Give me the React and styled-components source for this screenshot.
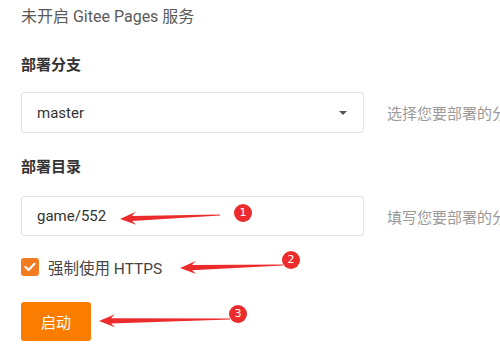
import React from 'react';
import styled, { createGlobalStyle } from 'styled-components';

const Global = createGlobalStyle`
  html, body { margin: 0; padding: 0; background: #fff; }
  body {
    font-family: Roboto, "Noto Sans CJK SC", sans-serif;
    overflow: hidden;
  }
`;

const Page = styled.div`
  position: relative;
  width: 500px;
  height: 348px;
  padding: 5px 0 0 21px;
  box-sizing: border-box;
  overflow: hidden;
`;

const Notice = styled.div`
  font-size: 16px;
  line-height: 24px;
  color: #5a5a5a;
`;

const Label = styled.div`
  margin-top: ${({ top }) => top}px;
  font-size: 15px;
  line-height: 24px;
  font-weight: 700;
  color: #333;
`;

const Row = styled.div`
  display: flex;
  align-items: center;
  gap: 23px;
  margin-top: ${({ top }) => top}px;
  white-space: nowrap;
`;

const Field = styled.div`
  position: relative;
  box-sizing: border-box;
  width: 343px;
  height: ${({ h }) => h}px;
  border: 1px solid #e3e3e3;
  border-radius: 3px;
  padding: 0 15px;
  display: flex;
  align-items: center;
  justify-content: space-between;
  font-size: 15px;
  color: #333;
  flex-shrink: 0;
`;

const Caret = styled.span`
  width: 0;
  height: 0;
  border-left: 4px solid transparent;
  border-right: 4px solid transparent;
  border-top: 4px solid #555;
  margin-right: 1px;
`;

const Hint = styled.span`
  font-size: 15px;
  color: #9a9a9a;
`;

const CheckRow = styled.label`
  display: flex;
  align-items: center;
  gap: 9px;
  margin-top: 19px;
  height: 24px;
  font-size: 15.5px;
  color: #444;
`;

const Box = styled.span`
  width: 18px;
  height: 18px;
  border-radius: 3px;
  background: #f47c20;
  display: flex;
  align-items: center;
  justify-content: center;
`;

const StartButton = styled.button`
  margin-top: 23px;
  width: 70px;
  height: 39px;
  border: none;
  border-radius: 3px;
  background: #fa7d00;
  color: #fff;
  font-family: inherit;
  font-size: 15px;
  display: block;
`;

const Mark = styled.div`
  position: absolute;
  left: ${({ x }) => x - 9}px;
  top: ${({ y }) => y - 9}px;
  width: 18px;
  height: 18px;
  border-radius: 50%;
  background: #ec2c2c;
  color: #fff;
  font-size: 11px;
  line-height: 18px;
  text-align: center;
  font-family: "DejaVu Sans", sans-serif;
`;

const Overlay = styled.svg`
  position: absolute;
  left: 0;
  top: 0;
  pointer-events: none;
`;

const arrow = (x1, y1, x2, y2) => {
  // tip at x1,y1 ; tail at x2,y2
  const dx = x2 - x1, dy = y2 - y1;
  const len = Math.hypot(dx, dy);
  const ux = dx / len, uy = dy / len;
  const nx = -uy, ny = ux;
  const hl = 16, hw = 6.5, sw = 2.6, tw = 0.6;
  const bx = x1 + ux * hl, by = y1 + uy * hl;
  const nb = x1 + ux * (hl - 4), nby = y1 + uy * (hl - 4);
  const p = [
    [x1, y1],
    [bx + nx * hw, by + ny * hw],
    [nb + nx * sw, nby + ny * sw],
    [x2 + nx * tw, y2 + ny * tw],
    [x2 - nx * tw, y2 - ny * tw],
    [nb - nx * sw, nby - ny * sw],
    [bx - nx * hw, by - ny * hw],
  ];
  return p.map((q) => q.join(',')).join(' ');
};

const Check = () => (
  <svg width="12" height="10" viewBox="0 0 12 10">
    <path d="M1.5 5 L4.6 8 L10.5 1.8" fill="none" stroke="#fff" strokeWidth="2.2" strokeLinecap="round" strokeLinejoin="round" />
  </svg>
);

export default function App() {
  return (
    <>
      <Global />
      <Page>
        <Notice>未开启 Gitee Pages 服务</Notice>

        <Label top={24}>部署分支</Label>
        <Row top={15}>
          <Field h={41}>
            master
            <Caret />
          </Field>
          <Hint>选择您要部署的分支</Hint>
        </Row>

        <Label top={22}>部署目录</Label>
        <Row top={17}>
          <Field h={40}>game/552</Field>
          <Hint>填写您要部署的分支上的目录</Hint>
        </Row>

        <CheckRow>
          <Box><Check /></Box>
          强制使用 HTTPS
        </CheckRow>

        <StartButton>启动</StartButton>

        <Overlay width="500" height="348">
          <polygon points={arrow(120, 219, 220, 215)} fill="#ec2c2c" />
          <polygon points={arrow(180, 268, 283, 265)} fill="#ec2c2c" />
          <polygon points={arrow(99, 321, 230, 319)} fill="#ec2c2c" />
        </Overlay>
        <Mark x={243} y={213}>1</Mark>
        <Mark x={291} y={260}>2</Mark>
        <Mark x={238} y={314}>3</Mark>
      </Page>
    </>
  );
}
